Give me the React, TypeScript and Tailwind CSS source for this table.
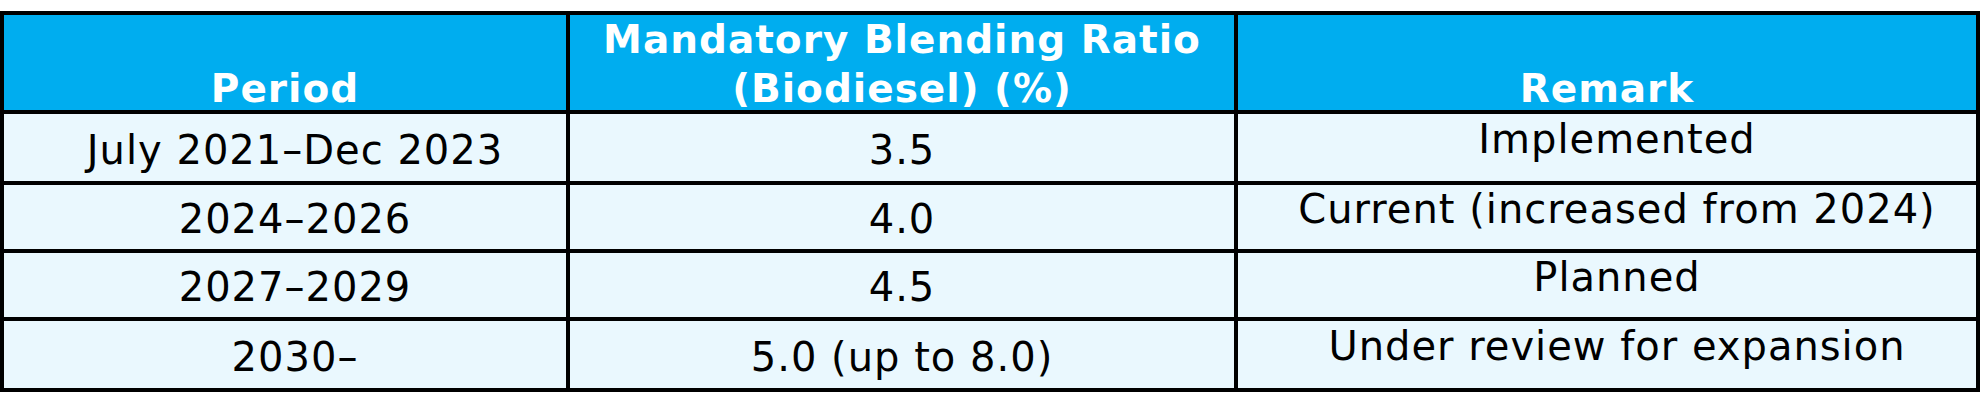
import React from 'react';

type Row = {
  period: string;
  ratio: string;
  remark: string;
};

const rows: Row[] = [
  { period: 'July 2021–Dec 2023', ratio: '3.5', remark: 'Implemented' },
  { period: '2024–2026', ratio: '4.0', remark: 'Current (increased from 2024)' },
  { period: '2027–2029', ratio: '4.5', remark: 'Planned' },
  { period: '2030–', ratio: '5.0 (up to 8.0)', remark: 'Under review for expansion' },
];

const HeaderCell: React.FC<{ children: React.ReactNode }> = ({ children }) => (
  <div className="bg-[#00adef] flex items-end justify-center text-center overflow-visible">
    <div className="-mb-[3px] text-[39px] leading-[49px] font-bold tracking-[1px] text-white">
      {children}
    </div>
  </div>
);

const bodyText = 'bg-[#eaf8fe] flex items-center justify-center text-[40px] leading-[47px] tracking-[1px] text-black whitespace-nowrap';

export default function App() {
  return (
    <div className="w-[1984px] h-[406px] bg-white pt-[11px] font-['DejaVu_Sans',Verdana,sans-serif]">
      <div className="w-[1980px] bg-black p-[4px] grid grid-cols-[562px_664px_738px] grid-rows-[95px_67px_64px_64px_67px] gap-[4px]">
        {/* Header */}
        <HeaderCell>Period</HeaderCell>
        <HeaderCell>
          Mandatory Blending Ratio
          <br />
          (Biodiesel) (%)
        </HeaderCell>
        <HeaderCell>Remark</HeaderCell>

        {/* Body rows */}
        {rows.map((row) => (
          <React.Fragment key={row.period}>
            <div className={`${bodyText} pt-[5px] pl-[20px]`}>{row.period}</div>
            <div className={`${bodyText} pt-[5px]`}>{row.ratio}</div>
            <div className={`${bodyText} pb-[16px] pl-[20px]`}>{row.remark}</div>
          </React.Fragment>
        ))}
      </div>
    </div>
  );
}
